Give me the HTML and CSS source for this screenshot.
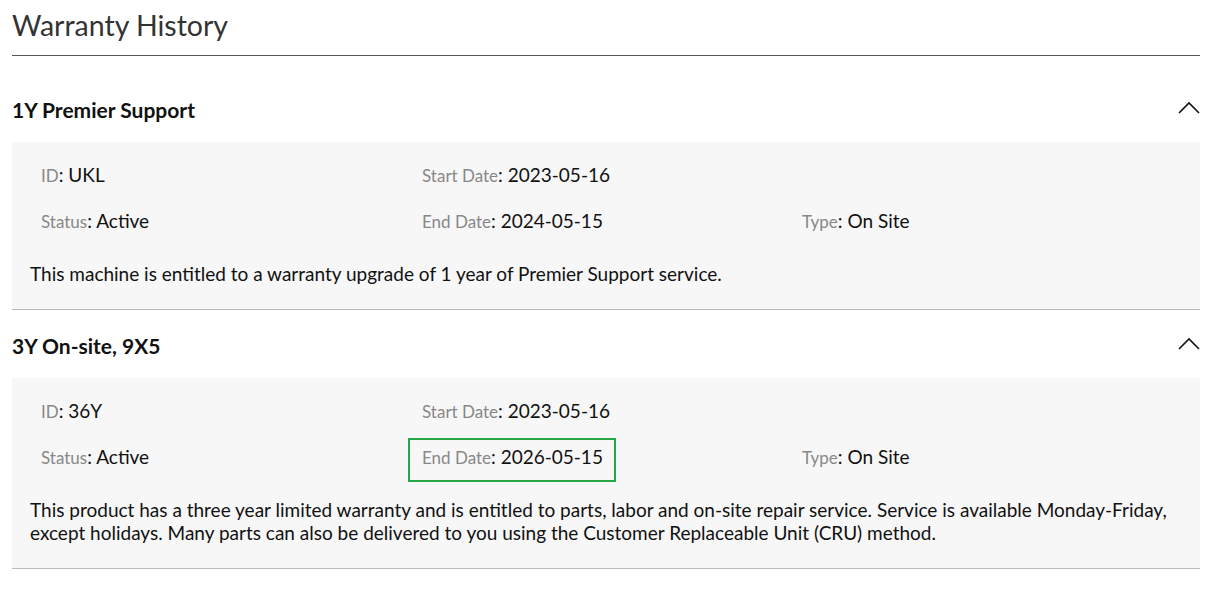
FILE: index.html
```html
<!DOCTYPE html>
<html lang="en">
<head>
<meta charset="utf-8">
<title>Warranty History</title>
<link rel="stylesheet" href="styles.css">
</head>
<body>
<div class="page">
  <h1 class="title">Warranty History</h1>

  <section class="warranty first">
    <div class="w-head">
      <h2 class="w-name">1Y Premier Support</h2>
      <svg class="chev" width="24" height="14" viewBox="0 0 24 14"><path d="M2 12 L12 2 L22 12" fill="none" stroke="#111" stroke-width="1.6"/></svg>
    </div>
    <div class="w-body">
      <div class="grid">
        <div class="cell"><span class="lbl">ID</span>: UKL</div>
        <div class="cell"><span class="lbl">Start Date</span>: 2023-05-16</div>
        <div class="cell"></div>
        <div class="cell"><span class="lbl">Status</span>: Active</div>
        <div class="cell"><span class="lbl">End Date</span>: 2024-05-15</div>
        <div class="cell"><span class="lbl">Type</span>: On Site</div>
      </div>
      <p class="desc">This machine is entitled to a warranty upgrade of 1 year of Premier Support service.</p>
    </div>
  </section>

  <section class="warranty">
    <div class="w-head">
      <h2 class="w-name">3Y On-site, 9X5</h2>
      <svg class="chev" width="24" height="14" viewBox="0 0 24 14"><path d="M2 12 L12 2 L22 12" fill="none" stroke="#111" stroke-width="1.6"/></svg>
    </div>
    <div class="w-body">
      <div class="grid">
        <div class="cell"><span class="lbl">ID</span>: 36Y</div>
        <div class="cell"><span class="lbl">Start Date</span>: 2023-05-16</div>
        <div class="cell"></div>
        <div class="cell"><span class="lbl">Status</span>: Active</div>
        <div class="cell"><span class="hl"><span class="lbl">End Date</span>: 2026-05-15</span></div>
        <div class="cell"><span class="lbl">Type</span>: On Site</div>
      </div>
      <p class="desc">This product has a three year limited warranty and is entitled to parts, labor and on-site repair service. Service is available Monday-Friday, except holidays. Many parts can also be delivered to you using the Customer Replaceable Unit (CRU) method.</p>
    </div>
  </section>
</div>
</body>
</html>
```

FILE: styles.css
```css
* { box-sizing: border-box; }
html, body { margin: 0; padding: 0; background: #fff; }
body {
  font-family: Lato, "Open Sans", "Liberation Sans", sans-serif;
  color: #222;
}
.page {
  width: 1188px;
  margin-left: 12px;
}
.title {
  margin: 0;
  font-size: 28.5px;
  font-weight: 400;
  color: #333;
  line-height: 34px;
  padding-top: 8px;
  padding-bottom: 13px;
  border-bottom: 1px solid #555;
}
.warranty.first { margin-top: 18px; }
.w-head {
  height: 68px;
  display: flex;
  align-items: center;
  justify-content: space-between;
}
.w-name {
  margin: 0;
  padding-top: 3px;
  font-size: 21px;
  font-weight: 700;
  color: #111;
  line-height: 24px;
}
.chev { margin-right: -1px; display: block; }
.w-body {
  background: #f7f7f7;
  border-bottom: 1px solid #bbb;
  padding: 21px 16px 24px 18px;
}
.grid {
  display: grid;
  grid-template-columns: 381px 380px 1fr;
  row-gap: 22px;
  padding-left: 11px;
}
.cell {
  font-size: 19px;
  line-height: 24px;
  height: 24px;
  color: #111;
}
.lbl { color: #888; font-size: 17px; }
.hl { position: relative; display: inline-block; line-height: 24px; }
.hl::after {
  content: "";
  position: absolute;
  left: -14px; right: -13px; top: -7px; bottom: -12px;
  border: 2px solid #27a844;
  pointer-events: none;
}
.desc {
  margin: 29px 0 0 0;
  font-size: 19px;
  line-height: 23px;
  color: #111;
}
```
